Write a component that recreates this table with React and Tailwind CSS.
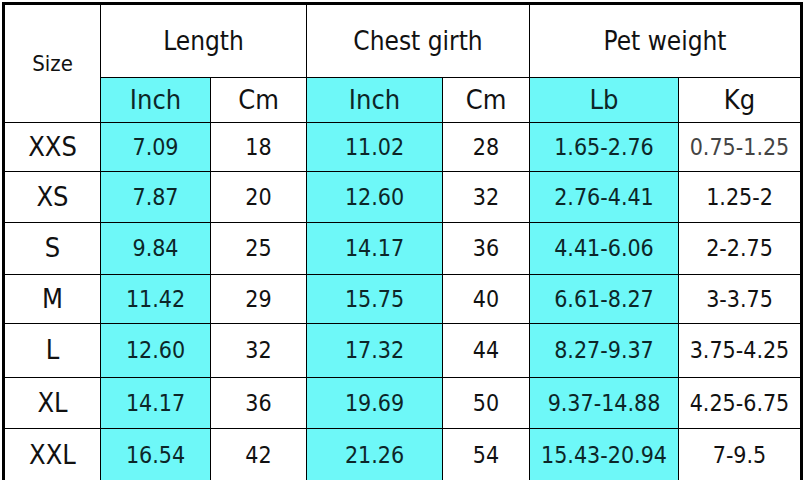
import React from "react";

const rows = [
  ["XXS", "7.09", "18", "11.02", "28", "1.65-2.76", "0.75-1.25"],
  ["XS", "7.87", "20", "12.60", "32", "2.76-4.41", "1.25-2"],
  ["S", "9.84", "25", "14.17", "36", "4.41-6.06", "2-2.75"],
  ["M", "11.42", "29", "15.75", "40", "6.61-8.27", "3-3.75"],
  ["L", "12.60", "32", "17.32", "44", "8.27-9.37", "3.75-4.25"],
  ["XL", "14.17", "36", "19.69", "50", "9.37-14.88", "4.25-6.75"],
  ["XXL", "16.54", "42", "21.26", "54", "15.43-20.94", "7-9.5"],
];

const cyan = "bg-[#6ef8f8] text-[#0c2628]";
const white = "bg-white text-[#111]";

export default function App() {
  return (
    <div
      className="bg-white w-[805px] h-[480px] overflow-hidden pt-[2px] pl-[2px]"
      style={{ fontFamily: '"DejaVu Sans Condensed", "DejaVu Sans", sans-serif', fontStretch: "condensed" }}
    >
      <div className="grid w-[801px] bg-black gap-px border-[3px] border-black grid-cols-[95px_109px_95px_135px_86px_148px_121px] grid-rows-[72px_44px_48px_50px_51px_48px_53px_50px_52px]">
        <div className={`${white} row-span-2 flex items-center justify-center text-[22px]`}>Size</div>
        <div className={`${white} col-span-2 flex items-center justify-center text-[26px]`}>Length</div>
        <div className={`${white} col-span-2 flex items-center justify-center text-[26px]`}>Chest girth</div>
        <div className={`${white} col-span-2 flex items-center justify-center text-[26px]`}>Pet weight</div>
        <div className={`${cyan} flex items-center justify-center text-[27px]`}>Inch</div>
        <div className={`${white} flex items-center justify-center text-[27px]`}>Cm</div>
        <div className={`${cyan} flex items-center justify-center text-[27px]`}>Inch</div>
        <div className={`${white} flex items-center justify-center text-[27px]`}>Cm</div>
        <div className={`${cyan} flex items-center justify-center text-[27px]`}>Lb</div>
        <div className={`${white} flex items-center justify-center text-[27px]`}>Kg</div>
        {rows.map((r, i) =>
          r.map((v, j) => (
            <div
              key={`${i}-${j}`}
              className={`${j === 1 || j === 3 || j === 5 ? cyan : white} ${
                j === 0 ? "text-[27px]" : "text-[23px]"
              } ${i === 0 && j === 6 ? "text-[#444]" : ""} flex items-center justify-center`}
            >
              {v}
            </div>
          ))
        )}
      </div>
    </div>
  );
}
